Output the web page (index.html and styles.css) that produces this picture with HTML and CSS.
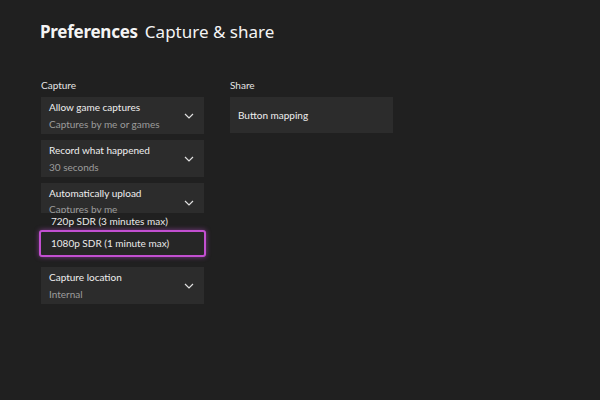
FILE: index.html
```html
<!DOCTYPE html>
<html>
<head>
<meta charset="utf-8">
<link rel="stylesheet" href="styles.css">
</head>
<body>
<div class="page">
  <h1 class="title"><span class="title-main">Preferences</span> <span class="title-sub">Capture &amp; share</span></h1>
  <div class="columns">
    <div class="col">
      <div class="section-label">Capture</div>
      <div class="card">
        <div class="card-text">
          <div class="card-title">Allow game captures</div>
          <div class="card-sub">Captures by me or games</div>
        </div>
        <svg class="chev" width="10" height="6" viewBox="0 0 10 6"><path d="M1 1 L5 5 L9 1" fill="none" stroke="#e0e0e0" stroke-width="1.2"/></svg>
      </div>
      <div class="card">
        <div class="card-text">
          <div class="card-title">Record what happened</div>
          <div class="card-sub">30 seconds</div>
        </div>
        <svg class="chev" width="10" height="6" viewBox="0 0 10 6"><path d="M1 1 L5 5 L9 1" fill="none" stroke="#e0e0e0" stroke-width="1.2"/></svg>
      </div>
      <div class="card card-open">
        <div class="card-text">
          <div class="card-title">Automatically upload</div>
          <div class="card-sub">Captures by me</div>
        </div>
        <svg class="chev" width="10" height="6" viewBox="0 0 10 6"><path d="M1 1 L5 5 L9 1" fill="none" stroke="#e0e0e0" stroke-width="1.2"/></svg>
      </div>
      <div class="dropdown">
        <div class="option">720p SDR (3 minutes max)</div>
        <div class="option option-focus">1080p SDR (1 minute max)</div>
      </div>
      <div class="card">
        <div class="card-text">
          <div class="card-title">Capture location</div>
          <div class="card-sub">Internal</div>
        </div>
        <svg class="chev" width="10" height="6" viewBox="0 0 10 6"><path d="M1 1 L5 5 L9 1" fill="none" stroke="#e0e0e0" stroke-width="1.2"/></svg>
      </div>
    </div>
    <div class="col">
      <div class="section-label">Share</div>
      <div class="card card-single">
        <div class="card-title">Button mapping</div>
      </div>
    </div>
  </div>
</div>
</body>
</html>
```
FILE: styles.css
```css
html, body {
  margin: 0;
  padding: 0;
}
body {
  background: #202020;
  width: 600px;
  height: 400px;
  overflow: hidden;
  font-family: "Noto Sans", "Open Sans", sans-serif;
  color: #ececec;
}
.page {
  padding: 20px 0 0 40px;
}
.title {
  margin: 0;
  font-size: 17px;
  line-height: 24px;
  font-weight: 400;
  color: #f4f4f4;
  display: flex;
  gap: 7px;
}
.title-main {
  font-weight: 700;
  letter-spacing: -0.25px;
}
.columns {
  display: flex;
  gap: 26px;
  margin-top: 35px;
  padding-left: 1px;
}
.col {
  width: 163px;
  display: flex;
  flex-direction: column;
}
.section-label {
  font-family: "Lato", "Noto Sans", sans-serif;
  font-size: 10px;
  line-height: 12px;
  color: #e4e4e4;
  margin-bottom: 6px;
}
.card {
  background: #2c2c2c;
  height: 37px;
  margin-bottom: 6px;
  display: flex;
  align-items: center;
  justify-content: space-between;
  padding: 0 8px;
  box-sizing: border-box;
}
.card-text {
  display: flex;
  flex-direction: column;
  gap: 5px;
}
.card-title,
.card-sub,
.option {
  font-family: "Lato", "Noto Sans", sans-serif;
  font-size: 10px;
  line-height: 12px;
}
.card-title {
  color: #efefef;
}
.card-sub {
  color: #9c9c9c;
}
.chev {
  margin-right: 2px;
  flex: none;
}
.card-open {
  height: 30px;
  margin-bottom: 0;
  align-items: flex-start;
  overflow: hidden;
  padding-top: 4px;
}
.card-open .chev {
  margin-top: 13px;
}
.card-open .card-text {
  gap: 4px;
}
.dropdown {
  display: flex;
  flex-direction: column;
  margin: 0 -2px 10px -2px;
}
.option {
  line-height: 17px;
  padding: 0 0 0 12px;
  color: #eaeaea;
}
.option-focus {
  height: 27px;
  line-height: 23px;
  box-sizing: border-box;
  border: 2px solid #c24fd0;
  border-radius: 3px;
  background: #262626;
  padding-left: 10px;
  box-shadow: 0 0 5px rgba(200, 80, 220, 0.55);
}
.card-single {
  height: 36px;
}
```
